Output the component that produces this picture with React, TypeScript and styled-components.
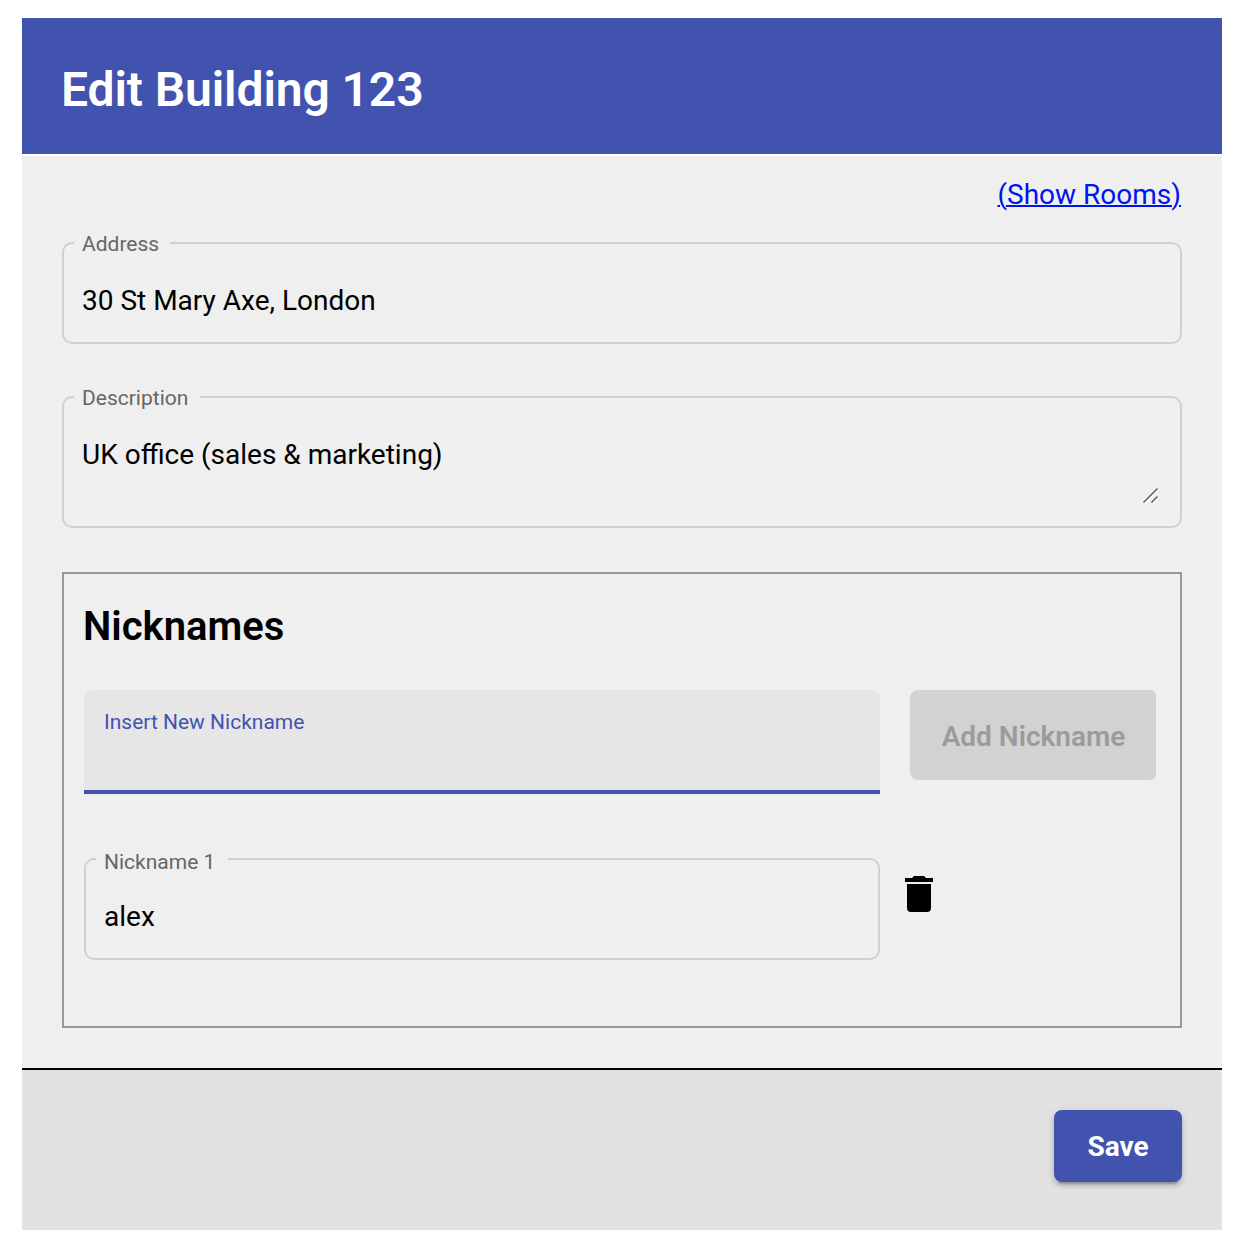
import React, { useState } from "react";
import styled, { createGlobalStyle } from "styled-components";

const GlobalStyle = createGlobalStyle`
  *, *::before, *::after { box-sizing: border-box; }
  body {
    margin: 0;
    background: #fff;
    color: #000;
    font-family: Roboto, "Liberation Sans", sans-serif;
    font-size: 28px;
  }
  input, textarea, button { font-family: inherit; }
`;

const Page = styled.main`
  width: 1246px;
  padding: 18px 24px 20px 22px;
`;

const Header = styled.header`
  display: flex;
  align-items: center;
  height: 136px;
  padding: 8px 39px 0;
  background: #4252af;
  color: #fff;
`;

const Title = styled.h1`
  margin: 0;
  font-size: 48px;
  font-weight: 600;
  letter-spacing: -0.1px;
  line-height: 64px;
`;

const Content = styled.section`
  display: flex;
  flex-direction: column;
  height: 912px;
  margin-top: 2px;
  padding: 23px 40px 40px;
  background: #efefef;
`;

const RoomsLink = styled.a`
  align-self: flex-end;
  margin-right: 1px;
  color: #0014ee;
  font-size: 28px;
  line-height: 32px;
  text-decoration-line: underline;
  text-decoration-thickness: 2px;
`;

const Outline = styled.fieldset<{ $height: number; $gap?: number }>`
  display: flex;
  width: 100%;
  min-width: 0;
  height: ${(p) => p.$height}px;
  margin: ${(p) => p.$gap ?? 0}px 0 0;
  padding: 41px 21px 0 10px;
  border: 2px solid #d0d0d0;
  border-radius: 10px;
`;

const Legend = styled.legend<{ $width: number }>`
  width: ${(p) => p.$width}px;
  height: 2px;
  padding: 0 0 0 8px;
  color: #666;
  font-size: 21px;
  line-height: 2px;
  white-space: nowrap;
`;

const LegendText = styled.span<{ $drop: number }>`
  display: block;
  transform: translateY(${(p) => p.$drop}px);
`;

const Input = styled.input`
  flex: 1;
  min-width: 0;
  height: 32px;
  padding: 0 8px;
  border: 0;
  outline: 0;
  background: transparent;
  color: #000;
  font-size: 28px;
  line-height: 32px;
`;

const TextArea = styled.textarea`
  flex: 1;
  min-width: 0;
  height: 66px;
  padding: 0 8px;
  border: 0;
  outline: 0;
  overflow: hidden;
  resize: none;
  background: transparent;
  color: #000;
  font-size: 28px;
  line-height: 32px;
`;

const ResizeGrip = styled.svg`
  flex: none;
  width: 16px;
  height: 16px;
  margin-top: 49px;
`;

const NicknamePanel = styled.section`
  height: 456px;
  margin-top: 44px;
  padding: 26px 24px 0 20px;
  border: 2px solid #999;
`;

const PanelTitle = styled.h2`
  margin: 0 0 0 -1px;
  font-size: 40px;
  font-weight: 600;
  line-height: 54px;
`;

const Row = styled.div<{ $top: number }>`
  display: grid;
  grid-template-columns: 796px 1fr;
  align-items: start;
  margin-top: ${(p) => p.$top}px;
`;

const FilledField = styled.label`
  display: flex;
  flex-direction: column;
  height: 104px;
  padding: 20px 20px 0;
  border-bottom: 4px solid #4252af;
  border-radius: 8px 8px 0 0;
  background: #e6e6e6;
`;

const FilledLabel = styled.span`
  color: #4252af;
  font-size: 21px;
  line-height: 24px;
`;

const FilledInput = styled.input`
  width: 100%;
  height: 36px;
  padding: 0;
  border: 0;
  outline: 0;
  background: transparent;
  font-size: 28px;
`;

const AddButton = styled.button`
  width: 246px;
  height: 90px;
  margin-left: 30px;
  padding: 2px 0 0 1px;
  border: 0;
  border-radius: 8px 6px 6px 8px;
  background: #d2d2d2;
  color: #9b9b9b;
  font-size: 28px;
  font-weight: 600;
  white-space: nowrap;
`;

const DeleteButton = styled.button`
  display: flex;
  width: 28px;
  height: 36px;
  margin: 18px 0 0 25px;
  padding: 0;
  border: 0;
  background: transparent;
  color: #000;
`;

const Footer = styled.footer`
  display: flex;
  justify-content: flex-end;
  align-items: flex-start;
  height: 162px;
  padding: 40px 40px 0;
  border-top: 2px solid #000;
  background: #e2e2e2;
`;

const SaveButton = styled.button`
  width: 128px;
  height: 72px;
  padding: 0;
  border: 0;
  border-radius: 8px;
  background: #4252af;
  box-shadow:
    0 6px 2px -4px rgba(0, 0, 0, 0.2),
    0 4px 4px 0 rgba(0, 0, 0, 0.14),
    0 2px 10px 0 rgba(0, 0, 0, 0.12);
  color: #fff;
  font-size: 28px;
  font-weight: 700;
`;

const TrashIcon = () => (
  <svg width="28" height="36" viewBox="0 0 28 36" fill="currentColor" aria-hidden="true">
    <path d="M2 8h24v24a4 4 0 0 1-4 4H6a4 4 0 0 1-4-4zM0 2h7l2-2h10l2 2h7v4H0z" />
  </svg>
);

export default function App() {
  const [address, setAddress] = useState("30 St Mary Axe, London");
  const [description, setDescription] = useState("UK office (sales & marketing)");
  const [newNickname, setNewNickname] = useState("");
  const [nickname, setNickname] = useState("alex");

  return (
    <>
      <GlobalStyle />
      <Page>
        <Header>
          <Title>Edit Building 123</Title>
        </Header>
        <Content>
          <RoomsLink href="#rooms">(Show Rooms)</RoomsLink>
          <Outline $height={102} $gap={31}>
            <Legend $width={96}>
              <LegendText $drop={1}>Address</LegendText>
            </Legend>
            <Input aria-label="Address" value={address} onChange={(e) => setAddress(e.target.value)} />
          </Outline>
          <Outline $height={132} $gap={52}>
            <Legend $width={126}>
              <LegendText $drop={1}>Description</LegendText>
            </Legend>
            <TextArea
              aria-label="Description"
              spellCheck={false}
              value={description}
              onChange={(e) => setDescription(e.target.value)}
            />
            <ResizeGrip viewBox="0 0 16 16" fill="none" aria-hidden="true">
              <path d="M2 15.5 15.5 2M10 15.5 15.5 10" stroke="#fff" strokeWidth="1.3" />
              <path d="M.5 14.5 14.5.5M8.5 14.5 14.5 8.5" stroke="#555" strokeWidth="1.4" />
            </ResizeGrip>
          </Outline>
          <NicknamePanel>
            <PanelTitle>Nicknames</PanelTitle>
            <Row $top={36}>
              <FilledField>
                <FilledLabel>Insert New Nickname</FilledLabel>
                <FilledInput value={newNickname} onChange={(e) => setNewNickname(e.target.value)} />
              </FilledField>
              <AddButton disabled={!newNickname}>Add Nickname</AddButton>
            </Row>
            <Row $top={64}>
              <Outline $height={102}>
                <Legend $width={132}>
                  <LegendText $drop={3}>Nickname 1</LegendText>
                </Legend>
                <Input aria-label="Nickname 1" value={nickname} onChange={(e) => setNickname(e.target.value)} />
              </Outline>
              <DeleteButton aria-label="Delete nickname">
                <TrashIcon />
              </DeleteButton>
            </Row>
          </NicknamePanel>
        </Content>
        <Footer>
          <SaveButton>Save</SaveButton>
        </Footer>
      </Page>
    </>
  );
}
